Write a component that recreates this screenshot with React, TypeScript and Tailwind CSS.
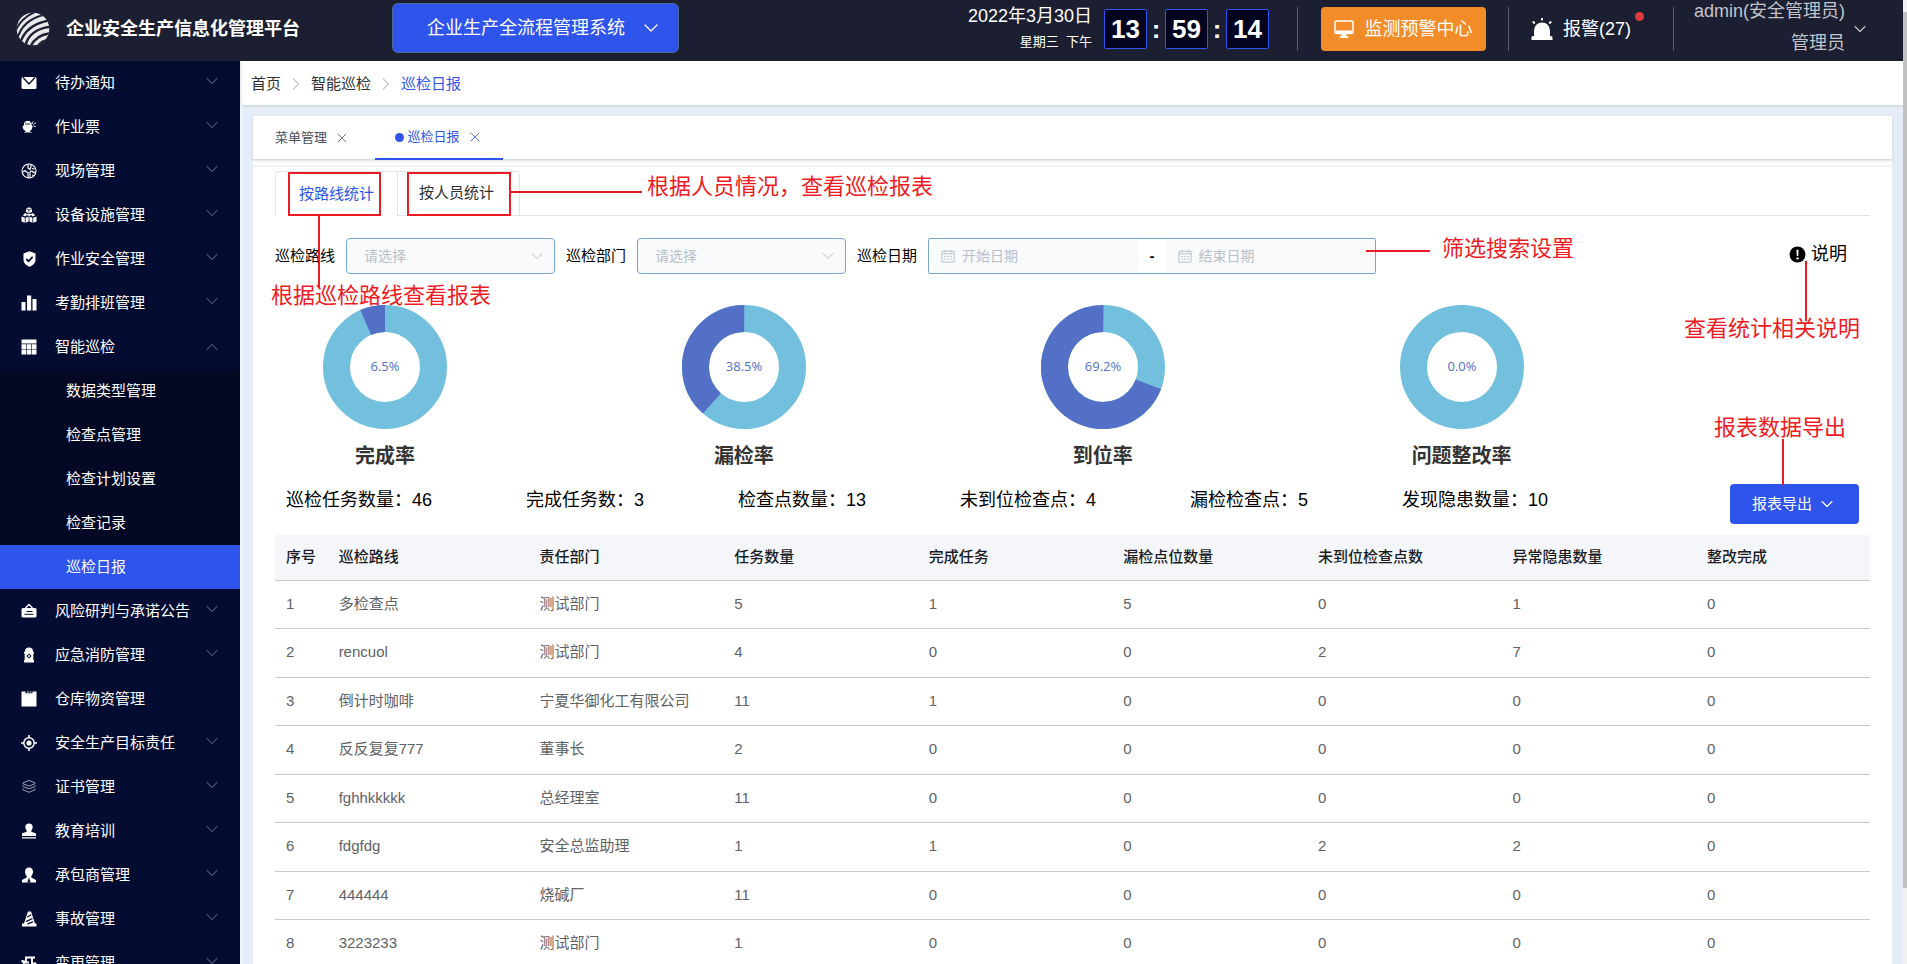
import type { ReactNode } from "react";
import { ChevronDown, ChevronUp, ChevronRight, X } from "lucide-react";

const Svg = ({ children, className = "size-4" }: { children: ReactNode; className?: string }) => (
  <svg viewBox="0 0 16 16" className={className} fill="currentColor" aria-hidden="true">
    {children}
  </svg>
);

const icons: Record<string, ReactNode> = {
  mail: (
    <Svg>
      <path d="M2 2h12a1.5 1.5 0 0 1 1.5 1.5v9A1.5 1.5 0 0 1 14 14H2a1.5 1.5 0 0 1-1.500-1.500v-9A1.500 1.500 0 0 1 2 2z" />
      <path d="M2 2.500l6 6.500 6-6.500" fill="none" stroke="#050c32" strokeWidth="1.300" />
    </Svg>
  ),
  lamp: (
    <Svg>
      <path d="M3 3.500h1.500V2h4.500v1.500h1.500V6l1.200 1-1 3.500-1.700 1.500v1H4.500v-1l-2-1.500L1.500 7.500 3 6z" />
      <path d="M4 5h5" stroke="#050c32" strokeWidth=".9" />
      <path d="M3 13.500h8" stroke="#8d92a8" strokeWidth=".9" />
      <path d="M11 5l1.200-2.500M12.500 5.500l2.500-2M12.500 7l2.300.6" stroke="currentColor" strokeWidth=".9" />
    </Svg>
  ),
  site: (
    <Svg>
      <circle cx="8" cy="8" r="7" fill="none" stroke="currentColor" strokeWidth="1.100" />
      <path d="M7 1v4l2 1.500 1-3V1.500M2 9l2-1.500L5.500 9 7 9.500V15M9 15V9l2-1 1.500 1.500L14.500 9M11 12l2 .5M11 5.500l3 .5" fill="none" stroke="currentColor" strokeWidth="1.200" />
    </Svg>
  ),
  cubes: (
    <Svg>
      <path d="M8 .3l3 1.200v3.600L8 6.500 5 5.100V1.500z" />
      <path d="M8 6.500l2.800 1.200L8 9 5.200 7.700zM4.200 6l2.300 1.500L4.200 9.500 1.800 8.300zM11.800 6l2.400 2.300-2.400 1.200-2.300-2z" />
      <path d="M.5 9.500l3.300 1.300v5L.5 14.500zM4.600 10.800L7.600 9.600v5l-3 1.200zM8.400 9.600l3 1.200v5l-3-1.200zM12.200 10.800l3.300-1.300v5l-3.300 1.300z" />
      <path d="M8 3v3.500M5 1.700L8 3l3-1.300" stroke="#050c32" strokeWidth=".7" fill="none" />
    </Svg>
  ),
  shield: (
    <Svg>
      <path d="M8.500.3l6 2.200v6c0 3.500-2.500 5.800-6 7.300-3.500-1.500-6-3.800-6-7.300v-6z" />
      <path d="M5.300 8l2.300 2.300 4-4.500" fill="none" stroke="#050c32" strokeWidth="1.800" />
    </Svg>
  ),
  bars: (
    <Svg>
      <path d="M.5 7h4v8.500h-4zM6 .5h4.200v15H6zM11.500 4h4v11.500h-4z" />
    </Svg>
  ),
  grid: (
    <Svg>
      <path d="M.5.5h15v4H.5zM.5 5.200h4.600v4.700H.5zM5.700 5.200h4.700v4.700H5.700zM11 5.200h4.500v4.700H11zM.5 10.500h4.600v5H.5zM5.700 10.500h4.700v5H5.700zM11 10.500h4.500v5H11z" />
    </Svg>
  ),
  board: (
    <Svg>
      <path d="M4.500 5L8 1.500 11.500 5" fill="none" stroke="currentColor" strokeWidth="1.400" />
      <path d="M2 5h12a1.500 1.500 0 0 1 1.500 1.500V13a1.500 1.500 0 0 1-1.500 1.500H2A1.500 1.500 0 0 1 .5 13V6.500A1.500 1.500 0 0 1 2 5z" />
      <path d="M5.500 8.500h6M3.500 11.300h9" stroke="#050c32" strokeWidth="1" />
    </Svg>
  ),
  hydrant: (
    <Svg>
      <path d="M4 4.500a4 4 0 0 1 8 0l1 .5v1.500h-.7v6.500H13V15.500H3V13h.7V6.500H3V5z" />
      <path d="M8 6.500L10.600 9 8 11.500 5.400 9z" fill="#050c32" />
      <circle cx="8" cy="9" r="1" />
    </Svg>
  ),
  box: (
    <Svg>
      <path d="M.5.5h4v1.700h7V.5h4v15H.5zM6 .5h1.700v1H6zM8.800.5h1.500v1H8.800z" />
    </Svg>
  ),
  target: (
    <Svg>
      <circle cx="8" cy="8" r="5.200" fill="none" stroke="currentColor" strokeWidth="1.500" />
      <circle cx="8" cy="8" r="2.600" />
      <path d="M8 0v3M8 13v3M0 8h3M13 8h3" stroke="currentColor" strokeWidth="1.600" />
    </Svg>
  ),
  layers: (
    <Svg>
      <g fill="none" stroke="#a9adbf" strokeWidth=".9">
        <path d="M8 1.500l6 2.300v1L8 7 2 4.800v-1zM2 7.500l6 2.300 6-2.300M2 6.500v1M14 6.500v1M2 10.800l6 2.500 6-2.500M2 9.500v1.300M14 9.500v1.300" />
      </g>
    </Svg>
  ),
  stamp: (
    <Svg>
      <path d="M8 .5a3.700 3.700 0 0 1 3.700 3.700c0 1.800-1.500 2.800-1.500 4.500L14 10a1 1 0 0 1 1 1v2H1v-2a1 1 0 0 1 1-1l3.800-1.300C5.800 7 4.300 6 4.300 4.200A3.700 3.700 0 0 1 8 .5zM1 14.200h14v1.300H1z" />
    </Svg>
  ),
  person: (
    <Svg>
      <path d="M8 .5c2.500 0 4 1.800 4 4 0 2-.8 3.500-1.700 4.500v1.500L15 13v2.500H1V13l4.700-2.500V9C4.800 8 4 6.500 4 4.500c0-2.200 1.500-4 4-4z" />
      <path d="M8 10.500L6.300 15.500h3.400z" fill="#050c32" />
    </Svg>
  ),
  cone: (
    <Svg>
      <path d="M7 .5h3l4 12h1.500v3H1v-3h2z" />
      <path d="M6.200 6l4-2.300M5 10.700l6.500-3.200M6.500 13.200l5.500-2.500" stroke="#050c32" strokeWidth="1.300" />
    </Svg>
  ),
  change: (
    <Svg>
      <path d="M3 15.500V6.500H1.500V5M4 2.500h10M5 2.500v5h3M11 2.500v13M11 8.500h3.500v3" fill="none" stroke="currentColor" strokeWidth="1.900" />
    </Svg>
  ),
};

type Item = { icon: string; label: string; arrow?: "up" | "down"; children?: string[] };

const menu: Item[] = [
  { icon: "mail", label: "待办通知", arrow: "down" },
  { icon: "lamp", label: "作业票", arrow: "down" },
  { icon: "site", label: "现场管理", arrow: "down" },
  { icon: "cubes", label: "设备设施管理", arrow: "down" },
  { icon: "shield", label: "作业安全管理", arrow: "down" },
  { icon: "bars", label: "考勤排班管理", arrow: "down" },
  {
    icon: "grid",
    label: "智能巡检",
    arrow: "up",
    children: ["数据类型管理", "检查点管理", "检查计划设置", "检查记录", "巡检日报"],
  },
  { icon: "board", label: "风险研判与承诺公告", arrow: "down" },
  { icon: "hydrant", label: "应急消防管理", arrow: "down" },
  { icon: "box", label: "仓库物资管理" },
  { icon: "target", label: "安全生产目标责任", arrow: "down" },
  { icon: "layers", label: "证书管理", arrow: "down" },
  { icon: "stamp", label: "教育培训", arrow: "down" },
  { icon: "person", label: "承包商管理", arrow: "down" },
  { icon: "cone", label: "事故管理", arrow: "down" },
  { icon: "change", label: "变更管理", arrow: "down" },
];

function Sidebar() {
  return (
    <nav className="w-60 shrink-0 overflow-hidden bg-[#050c32] text-[15px] text-white">
      <ul>
        {menu.map((m) => (
          <li key={m.label}>
            <button type="button" className="flex h-11 w-full items-center pr-[18px] pl-[21px] text-left whitespace-nowrap">
              {icons[m.icon]}
              <span className="ml-[18px] flex-1">{m.label}</span>
              {m.arrow === "down" && <ChevronDown className="mb-1 size-5 text-[#767b90]" strokeWidth={1.2} />}
              {m.arrow === "up" && <ChevronUp className="size-5 text-[#767b90]" strokeWidth={1.2} />}
            </button>
            {m.children && (
              <ul className="bg-[#030824]">
                {m.children.map((c) => (
                  <li key={c}>
                    <a
                      href="#"
                      className={
                        c === "巡检日报"
                          ? "flex h-11 items-center bg-[#2f54eb] pl-[66px]"
                          : "flex h-11 items-center pl-[66px]"
                      }
                    >
                      {c}
                    </a>
                  </li>
                ))}
              </ul>
            )}
          </li>
        ))}
      </ul>
    </nav>
  );
}

function Logo() {
  return (
    <svg viewBox="0 0 34 34" className="size-[34px]" aria-hidden="true">
      <defs>
        <clipPath id="globe">
          <circle cx="17" cy="17" r="16.500" />
        </clipPath>
      </defs>
      <g clipPath="url(#globe)">
        <circle cx="17" cy="17" r="16.500" fill="#e9e9e9" />
        <g fill="none" stroke="#1b1f31">
          <path d="M-1 21C2 11 9 4 21-1" strokeWidth="2" />
          <path d="M1 28C4 15 14 6 29 2.500" strokeWidth="2.200" />
          <path d="M4 32C7 20 17 11 35 8" strokeWidth="2.400" />
          <path d="M9 35C11 24 20 16 36 14.500" strokeWidth="2.600" />
          <path d="M14 36C17 28 24 22 36 21" strokeWidth="2.600" />
          <path d="M21 36C23 31 28 28 36 27" strokeWidth="2.400" />
        </g>
      </g>
    </svg>
  );
}

function Clock() {
  const box =
    "flex h-10 w-[43px] items-center justify-center rounded-xs border border-[#2f54eb] bg-[#02031f] pt-px text-[26px] font-bold";
  const colon = "w-[18px] text-center text-[26px] font-bold leading-10";
  return (
    <div className="flex">
      <span className={box}>13</span>
      <span className={colon}>:</span>
      <span className={box}>59</span>
      <span className={colon}>:</span>
      <span className={box}>14</span>
    </div>
  );
}

function Header() {
  return (
    <header className="flex h-[61px] shrink-0 items-start bg-[#1b1f31] whitespace-nowrap text-white">
      <div className="flex h-[57px] w-[392px] shrink-0 items-center gap-4 pl-4">
        <Logo />
        <h1 className="text-lg font-bold">企业安全生产信息化管理平台</h1>
      </div>
      <button
        type="button"
        className="mt-[3px] flex h-[50px] w-[287px] items-center gap-[14px] rounded-md border border-[#4a6a9a] bg-[#2f54eb] pl-[34px] text-lg"
      >
        企业生产全流程管理系统
        <ChevronDown className="size-6" strokeWidth={1.3} />
      </button>
      <div className="ml-auto flex h-[57px] items-center">
        <div className="mr-3 text-right">
          <div className="text-lg leading-[26px]">2022年3月30日</div>
          <div className="text-[13px] leading-[26px]">星期三&nbsp; 下午</div>
        </div>
        <Clock />
        <div className="ml-[28px] h-11 w-px bg-[#575b6b]" />
        <button
          type="button"
          className="ml-[23px] flex h-11 w-[165px] items-center justify-center gap-[10px] rounded-sm bg-[#f28c28] text-lg"
        >
          <svg viewBox="0 0 20 18" className="h-[18px] w-5" aria-hidden="true">
            <rect x="1" y="1" width="18" height="12.500" rx="1.500" fill="none" stroke="#fff" strokeWidth="1.500" />
            <rect x="2" y="10.500" width="16" height="3" fill="#fff" />
            <path d="M7.500 13.500h5v3h2V18h-9v-1.500h2z" fill="#fff" />
          </svg>
          监测预警中心
        </button>
        <div className="ml-[22px] h-11 w-px bg-[#575b6b]" />
        <button type="button" className="relative ml-[22px] flex items-center gap-[10px] text-lg">
          <svg viewBox="0 0 22 22" className="size-[22px]" fill="#fff" aria-hidden="true">
            <path d="M3 18.500v-6a8 8 0 0 1 16 0v6z" />
            <path d="M.5 22v-2.500a1.500 1.500 0 0 1 1.500-1.500h18a1.500 1.500 0 0 1 1.500 1.500V22z" />
            <path d="M11 0v2.500M1.800 3.500l2 2M20.200 3.500l-2 2" stroke="#fff" strokeWidth="1.800" />
          </svg>
          报警(27)
          <span className="absolute -top-[3px] -right-[13px] size-[9px] rounded-full bg-[#e03c3c]" />
        </button>
        <div className="ml-[42px] h-11 w-px bg-[#575b6b]" />
        <button type="button" className="mr-[33px] ml-[20px] flex items-center gap-[5px] text-lg text-[#c3c4c9]">
          <span className="pb-1 text-right leading-8">
            admin(安全管理员)
            <br />
            管理员
          </span>
          <ChevronDown className="size-5" strokeWidth={1.3} />
        </button>
      </div>
    </header>
  );
}

function FilterSelect({ id, label }: { id: string; label: string }) {
  return (
    <div className="flex items-center gap-[11px]">
      <label htmlFor={id}>{label}</label>
      <div className="relative">
        <select
          id={id}
          className="block h-9 w-[209px] appearance-none rounded-sm border border-[#78a5cc] bg-[#f8fafc] px-[17px] text-sm text-[#b8bfca]"
        >
          <option>请选择</option>
        </select>
        <ChevronDown className="pointer-events-none absolute top-2 right-2 size-5 text-[#b8bfca]" strokeWidth={1.2} />
      </div>
    </div>
  );
}

function CalendarIcon() {
  return (
    <Svg className="size-[14px] shrink-0">
      <path
        d="M1 2.500h14v12.500H1zM1 5.500h14M4.500 1v3M11.500 1v3M3.500 8.500h2M7 8.500h2M10.500 8.500h2M3.500 11.500h2M7 11.500h2M10.500 11.500h2"
        fill="none"
        stroke="#b8bfca"
        strokeWidth="1.100"
      />
    </Svg>
  );
}

function DateField({ label, className }: { label: string; className: string }) {
  return (
    <div className={className}>
      <CalendarIcon />
      <input
        type="text"
        aria-label={label}
        placeholder={label}
        className="w-full min-w-0 bg-transparent text-sm placeholder:text-[#b8bfca]"
      />
    </div>
  );
}

function Donut({ percent, label }: { percent: number; label: string }) {
  const r = 48.5;
  const length = 2 * Math.PI * r;
  return (
    <figure className="flex w-[220px] flex-col items-center">
      <svg viewBox="0 0 124 124" className="size-[124px]" role="img" aria-label={label}>
        <circle cx="62" cy="62" r={r} fill="none" stroke="#73c0de" strokeWidth="27" />
        {percent > 0 && (
          <circle
            cx="62"
            cy="62"
            r={r}
            fill="none"
            stroke="#5470c6"
            strokeWidth="27"
            strokeDasharray={`${(length * percent) / 100} ${length}`}
            transform={`rotate(${-90 - percent * 3.6} 62 62)`}
          />
        )}
        <text x="62" y="66" textAnchor="middle" className="fill-[#5470c6] font-['Open_Sans',sans-serif] text-[13px]">
          {percent.toFixed(1)}%
        </text>
      </svg>
      <figcaption className="mt-[13px] text-xl leading-7 font-bold text-[#333]">{label}</figcaption>
    </figure>
  );
}

const stats = [
  ["巡检任务数量", 46],
  ["完成任务数", 3],
  ["检查点数量", 13],
  ["未到位检查点", 4],
  ["漏检检查点", 5],
  ["发现隐患数量", 10],
];

const columns = [
  { title: "序号", width: "w-[3.3%]" },
  { title: "巡检路线", width: "w-[12.6%]" },
  { title: "责任部门", width: "w-[12.2%]" },
  { title: "任务数量", width: "w-[12.2%]" },
  { title: "完成任务", width: "w-[12.2%]" },
  { title: "漏检点位数量", width: "w-[12.2%]" },
  { title: "未到位检查点数", width: "w-[12.2%]" },
  { title: "异常隐患数量", width: "w-[12.2%]" },
  { title: "整改完成", width: "w-[10.9%]" },
];

const rows = [
  [1, "多检查点", "测试部门", 5, 1, 5, 0, 1, 0],
  [2, "rencuol", "测试部门", 4, 0, 0, 2, 7, 0],
  [3, "倒计时咖啡", "宁夏华御化工有限公司", 11, 1, 0, 0, 0, 0],
  [4, "反反复复777", "董事长", 2, 0, 0, 0, 0, 0],
  [5, "fghhkkkkk", "总经理室", 11, 0, 0, 0, 0, 0],
  [6, "fdgfdg", "安全总监助理", 1, 1, 0, 2, 2, 0],
  [7, "444444", "烧碱厂", 11, 0, 0, 0, 0, 0],
  [8, "3223233", "测试部门", 1, 0, 0, 0, 0, 0],
];

function ReportTable() {
  return (
    <table className="w-full table-fixed border-collapse text-left whitespace-nowrap">
      <thead>
        <tr className="h-[45px] border-b border-[#c8c8c8] bg-[#f4f6fa] text-[#1a1c24]">
          {columns.map((c) => (
            <th key={c.title} className={`pl-[11px] font-medium ${c.width}`}>
              {c.title}
            </th>
          ))}
        </tr>
      </thead>
      <tbody className="text-[#606266]">
        {rows.map((r) => (
          <tr key={r[0]} className="h-12 border-b border-[#c8c8c8] even:h-[49px]">
            {r.map((v, i) => (
              <td key={i} className="pl-[11px]">
                {v}
              </td>
            ))}
          </tr>
        ))}
      </tbody>
    </table>
  );
}

/* Red call-outs drawn over the report. */
function Callouts() {
  const text = "absolute whitespace-nowrap text-[22px] leading-7";
  const line = "absolute bg-[#ed1c24]";
  return (
    <div className="pointer-events-none absolute inset-x-0 -top-0.5 text-[#ed1c24]">
      <div className="absolute top-[7px] left-[35px] h-11 w-[93px] border-2 border-[#ed1c24]" />
      <div className="absolute top-[7px] left-[154px] h-11 w-[104px] border-2 border-[#ed1c24]" />
      <div className={`${line} top-[26px] left-[258px] h-[2px] w-[131px]`} />
      <p className={`${text} top-[8px] left-[394px]`}>根据人员情况，查看巡检报表</p>
      <div className={`${line} top-[49px] left-[65px] h-[74px] w-[2px]`} />
      <p className={`${text} top-[117px] left-[18px]`}>根据巡检路线查看报表</p>
      <div className={`${line} top-[85px] left-[1113px] h-[2px] w-[64px]`} />
      <p className={`${text} top-[70px] left-[1189px]`}>筛选搜索设置</p>
      <div className={`${line} top-[96px] right-[85px] h-[60px] w-[2px]`} />
      <p className={`${text} top-[150px] right-[32px]`}>查看统计相关说明</p>
      <div className={`${line} top-[274px] right-[108px] h-[46px] w-[2px]`} />
      <p className={`${text} top-[249px] right-[46px]`}>报表数据导出</p>
    </div>
  );
}

function Report() {
  return (
    <section className="relative flex-1 border-t-2 border-[#f1f1f2] bg-white px-[22px] pt-1">
      <div role="tablist" className="flex h-[45px] border-b border-[#e0e3ec]">
        <button
          type="button"
          role="tab"
          aria-selected="true"
          className="-mb-px h-[45px] w-[122px] rounded-tl-sm border-t border-l border-[#e0e3ec] bg-white pr-1 pl-1 text-[#2f54eb]"
        >
          按路线统计
        </button>
        <button
          type="button"
          role="tab"
          className="-mb-px h-[45px] w-[123px] rounded-tr-sm border border-[#e0e3ec] pr-1 text-[#303133]"
        >
          按人员统计
        </button>
      </div>

      <div className="mt-[22px] flex items-center text-black">
        <div className="flex items-center gap-[11px]">
          <FilterSelect id="route" label="巡检路线" />
          <FilterSelect id="dept" label="巡检部门" />
          <span>巡检日期</span>
        </div>
        <div className="ml-[11px] flex h-9 w-[448px] items-center rounded-xs border border-[#78a5cc] bg-white">
          <DateField label="开始日期" className="flex h-full flex-1 items-center gap-[7px] bg-[#f8fafc] pl-3" />
          <span className="w-[27px] text-center font-bold">-</span>
          <DateField label="结束日期" className="flex h-full flex-1 items-center gap-[7px] bg-[#f8fafc] pl-3" />
        </div>
        <button type="button" className="mr-[23px] ml-auto flex h-8 items-center gap-[5px] self-start text-lg">
          <Svg className="size-[17px]">
            <circle cx="8" cy="8" r="7.500" />
            <path d="M7 3.500h2L8.700 9.500H7.300z" fill="#fff" />
            <circle cx="8" cy="11.700" r="1.100" fill="#fff" />
          </Svg>
          说明
        </button>
      </div>

      <div className="mt-[31px] grid w-[90%] grid-cols-4">
        <Donut percent={6.5} label="完成率" />
        <Donut percent={38.5} label="漏检率" />
        <Donut percent={69.2} label="到位率" />
        <Donut percent={0} label="问题整改率" />
      </div>

      <div className="mt-[14px] mb-[11px] flex h-10 items-start pr-[11px] pl-[11px]">
        <div className="flex gap-[94px] text-lg leading-8 whitespace-nowrap text-black">
          {stats.map(([k, v]) => (
            <span key={k}>
              {k}：{v}
            </span>
          ))}
        </div>
        <button
          type="button"
          className="ml-auto flex h-10 w-[129px] items-center justify-center gap-[5px] rounded-sm bg-[#2f54eb] text-white"
        >
          报表导出
          <ChevronDown className="size-5" strokeWidth={1.3} />
        </button>
      </div>

      <ReportTable />
      <Callouts />
    </section>
  );
}

export default function App() {
  return (
    <div className="flex h-screen overflow-hidden bg-[#e5ecf8] font-['Liberation_Sans','Noto_Sans_CJK_SC',sans-serif] text-[15px]">
      <div className="flex min-w-0 flex-1 flex-col">
        <Header />
        <div className="flex min-h-0 flex-1">
          <Sidebar />
          <main className="flex min-w-0 flex-1 flex-col border-l-2 border-[#f3f4f6]">
            <nav aria-label="breadcrumb" className="flex h-11 shrink-0 items-center bg-white pt-0.5 pl-[9px] text-[#303133] shadow-sm">
              <a href="#">首页</a>
              <ChevronRight className="mx-[5px] size-5 text-[#c0c4cc]" strokeWidth={1.3} />
              <a href="#">智能巡检</a>
              <ChevronRight className="mx-[5px] size-5 text-[#c0c4cc]" strokeWidth={1.3} />
              <a href="#" className="text-[#2f54eb]">
                巡检日报
              </a>
            </nav>
            <div className="mt-[11px] mr-[11px] ml-[11px] flex min-h-0 flex-1 flex-col bg-white">
              <div className="mb-[5px] flex h-11 shrink-0 border-b border-[#d8dce6] text-[13px] text-[#495060] shadow-sm">
                <div className="flex w-[122px] items-center gap-[7px] pl-[22px]">
                  菜单管理
                  <button type="button" aria-label="关闭菜单管理">
                    <X className="size-4" strokeWidth={1.2} />
                  </button>
                </div>
                <div className="-mb-px flex w-32 items-center justify-center gap-[7px] border-b-2 border-[#2f54eb] text-[#2f54eb]">
                  <span className="flex items-center gap-[3px]">
                    <span className="size-[9px] rounded-full bg-[#2f54eb]" />
                    巡检日报
                  </span>
                  <button type="button" aria-label="关闭巡检日报">
                    <X className="size-4" strokeWidth={1.2} />
                  </button>
                </div>
              </div>
              <Report />
            </div>
          </main>
        </div>
      </div>
      <div className="w-1 shrink-0 bg-[#f1f1f1] pt-3">
        <div className="h-[92%] bg-[#c1c1c1]" />
      </div>
    </div>
  );
}
